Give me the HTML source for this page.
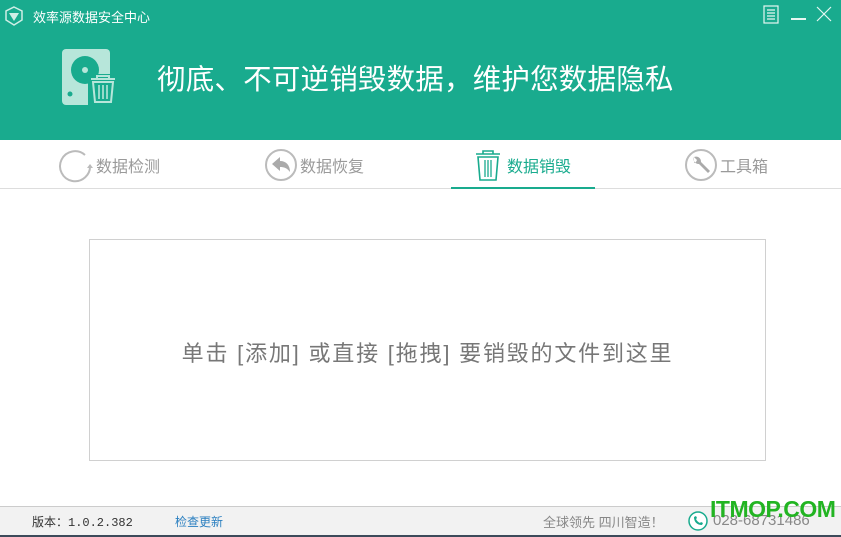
<!DOCTYPE html>
<html><head><meta charset="utf-8"><style>
*{margin:0;padding:0;box-sizing:border-box}
body{width:841px;height:537px;overflow:hidden;background:#fff;font-family:"Liberation Sans","Noto Sans CJK SC",sans-serif;position:relative}
.hdr{position:absolute;left:0;top:0;width:841px;height:140px;background:#19ab8e}
.abs{position:absolute}
.tab{position:absolute;top:147px;height:36px;display:flex;align-items:center;font-size:16px;color:#9a9a9a}
</style></head><body>
<div class="hdr">
 <svg class="abs" style="left:4px;top:6px" width="20" height="20" viewBox="0 0 20 20"><path d="M10 1 L18 5 L18 14 L10 19 L2 14 L2 5Z" fill="none" stroke="#cfeee6" stroke-width="1.5"/><path d="M5 7 L15 7 L10 15Z" fill="#cfeee6"/></svg>
 <div class="abs" style="left:33px;top:7px;color:#fff;font-size:13px">效率源数据安全中心</div>
 <svg class="abs" style="left:763px;top:5px" width="16" height="19"><rect x="1" y="1" width="14" height="17" fill="none" stroke="#e6f7f2" stroke-width="1.2"/><path d="M4 5h8M4 8h8M4 11h8M4 14h8" stroke="#e6f7f2" stroke-width="1.2"/></svg>
 <div class="abs" style="left:791px;top:18px;width:15px;height:1.5px;background:#e6f7f2"></div>
 <svg class="abs" style="left:816px;top:6px" width="16" height="16"><path d="M1 1L15 15M15 1L1 15" stroke="#e6f7f2" stroke-width="1.2"/></svg>
 <svg class="abs" style="left:60px;top:48px" width="58" height="58" viewBox="0 0 56 58"><rect x="1" y="1" width="48" height="56" rx="4" fill="#b7e6da"/><circle cx="24" cy="22" r="14" fill="#19ab8e"/><circle cx="24" cy="22" r="3" fill="#b7e6da"/><circle cx="9" cy="46" r="2.5" fill="#19ab8e"/><rect x="27" y="26" width="28" height="32" fill="#19ab8e"/><path d="M30 31h24M36 31v-3h12v3M32 34h20l-2 20h-16z" fill="none" stroke="#b7e6da" stroke-width="2"/><path d="M38 37v14M42 37v14M46 37v14" stroke="#b7e6da" stroke-width="1.6"/></svg>
 <div class="abs" style="left:157px;top:57px;color:#fff;font-size:28.5px;letter-spacing:0.2px">彻底、不可逆销毁数据，维护您数据隐私</div>
</div>
<div class="abs" style="left:0;top:188px;width:841px;height:1px;background:#ddd"></div>
<div class="tab" style="left:57px"><svg width="36" height="36"><path d="M28 8A15 15 0 1 0 33 18" fill="none" stroke="#bbb" stroke-width="2"/><path d="M30 21l3-4 3 4z" fill="#bbb"/></svg><span style="margin-left:3px">数据检测</span></div>
<div class="tab" style="left:264px"><svg width="34" height="34"><circle cx="17" cy="17" r="15" fill="none" stroke="#bbb" stroke-width="2"/><path d="M8 16l8-7v4c6 0 10 4 10 11-3-4-6-5-10-5v4z" fill="#aaa"/></svg><span style="margin-left:2px">数据恢复</span></div>
<div class="tab" style="left:474px;color:#19ab8e"><svg width="28" height="34"><path d="M2 6h24M9 6v-3h10v3M4 9h20l-2 23h-16z" fill="none" stroke="#19ab8e" stroke-width="1.6"/><path d="M11 12v17M14 12v17M17 12v17" stroke="#19ab8e" stroke-width="1.3"/></svg><span style="margin-left:5px">数据销毁</span></div>
<div class="abs" style="left:451px;top:187px;width:144px;height:2px;background:#19ab8e"></div>
<div class="tab" style="left:684px"><svg width="34" height="34"><circle cx="17" cy="17" r="15" fill="none" stroke="#bbb" stroke-width="2"/><path d="M10 9a5 5 0 0 0 5 7l9 9 2-2-9-9a5 5 0 0 0-7-5l3 3-1 2-2 1z" fill="#aaa"/></svg><span style="margin-left:2px">工具箱</span></div>
<div class="abs" style="left:89px;top:239px;width:677px;height:222px;border:1px solid #d0d0d0"></div>
<div class="abs" style="left:89px;top:336px;width:677px;text-align:center;font-size:22px;letter-spacing:1.8px;color:#777">单击 [添加] 或直接 [拖拽] 要销毁的文件到这里</div>
<div class="abs" style="left:0;top:506px;width:841px;height:31px;background:#f2f2f2;border-top:1px solid #ccc"></div>
<div class="abs" style="left:32px;top:513px;font-size:12px;color:#333;font-family:'Liberation Mono','Noto Sans CJK SC',monospace">版本：1.0.2.382</div>
<div class="abs" style="left:175px;top:513px;font-size:12px;color:#2a7fc0">检查更新</div>
<div class="abs" style="left:543px;top:512px;font-size:13px;color:#888">全球领先 四川智造！</div>
<svg class="abs" style="left:688px;top:511px" width="20" height="20"><circle cx="10" cy="10" r="9" fill="#fff" stroke="#19ab8e" stroke-width="1.5"/><path d="M6 6c0 5 3 8 8 8l1-2-2-1-1 1c-2-1-3-2-4-4l1-1-1-2z" fill="#19ab8e"/></svg>
<div class="abs" style="left:713px;top:512px;font-size:15px;color:#888">028-68731486</div>
<div class="abs" style="left:710px;top:496px;font-size:23px;color:#22b422;font-weight:bold;letter-spacing:-0.5px">ITMOP.COM</div>
<div class="abs" style="left:0;top:535px;width:841px;height:2px;background:#3c4a5a"></div>
</body></html>
